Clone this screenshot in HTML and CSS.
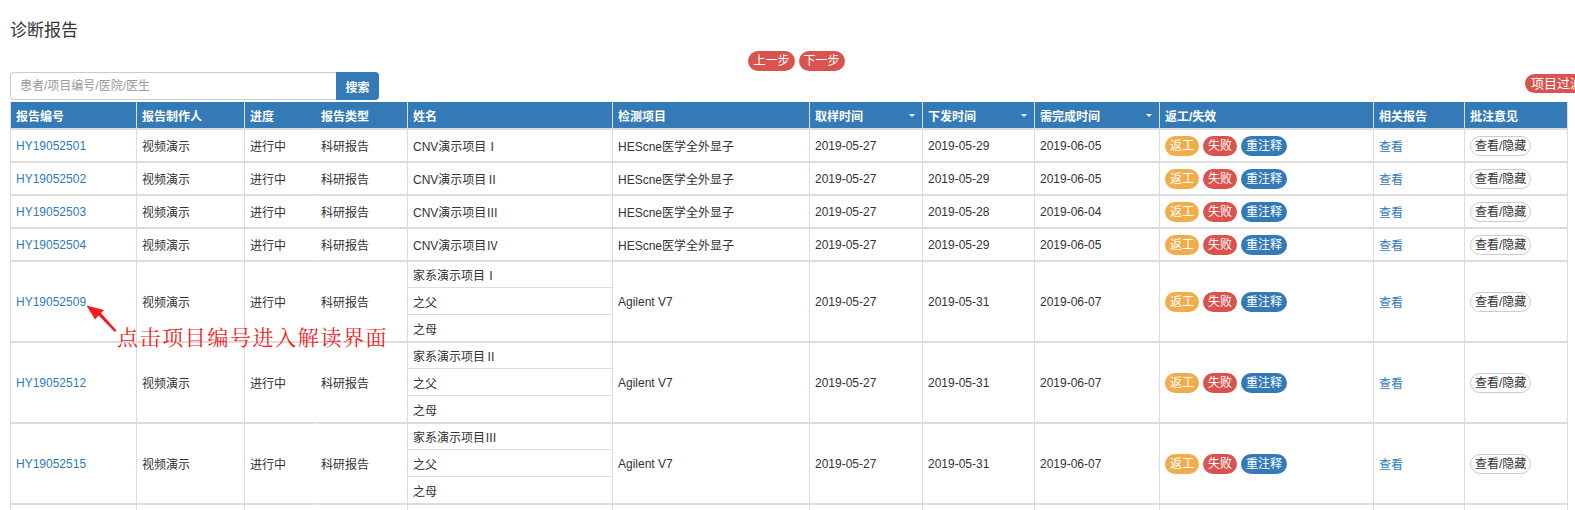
FILE: index.html
```html
<!DOCTYPE html>
<html lang="zh-CN">
<head>
<meta charset="utf-8">
<title>诊断报告</title>
<link rel="stylesheet" href="styles.css">
</head>
<body>
<div class="page">
  <h1 class="title">诊断报告</h1>
  <div class="steps">
    <span class="pill red">上一步</span>
    <span class="pill red">下一步</span>
  </div>
  <div class="toolbar">
    <div class="search">
      <input class="search-input" type="text" placeholder="患者/项目编号/医院/医生">
      <button class="search-btn">搜索</button>
    </div>
    <span class="pill red filter">项目过滤</span>
  </div>
  <table class="grid">
    <thead>
      <tr>
        <th class="c1">报告编号</th>
        <th class="c2">报告制作人</th>
        <th class="c3 nob">进度</th>
        <th class="c4">报告类型</th>
        <th class="c5">姓名</th>
        <th class="c6">检测项目</th>
        <th class="c7"><div class="sort"><span>取样时间</span><i class="caret"></i></div></th>
        <th class="c8"><div class="sort"><span>下发时间</span><i class="caret"></i></div></th>
        <th class="c9"><div class="sort"><span>需完成时间</span><i class="caret"></i></div></th>
        <th class="c10">返工/失效</th>
        <th class="c11">相关报告</th>
        <th class="c12">批注意见</th>
      </tr>
    </thead>
    <tbody>
      <tr>
        <td><a class="link">HY19052501</a></td><td>视频演示</td><td class="nob">进行中</td><td>科研报告</td>
        <td>CNV演示项目Ⅰ</td><td>HEScne医学全外显子</td><td>2019-05-27</td><td>2019-05-29</td><td>2019-06-05</td>
        <td><span class="pill orange">返工</span><span class="pill red">失败</span><span class="pill blue">重注释</span></td>
        <td><a class="link">查看</a></td><td><span class="toggle">查看/隐藏</span></td>
      </tr>
      <tr>
        <td><a class="link">HY19052502</a></td><td>视频演示</td><td class="nob">进行中</td><td>科研报告</td>
        <td>CNV演示项目Ⅱ</td><td>HEScne医学全外显子</td><td>2019-05-27</td><td>2019-05-29</td><td>2019-06-05</td>
        <td><span class="pill orange">返工</span><span class="pill red">失败</span><span class="pill blue">重注释</span></td>
        <td><a class="link">查看</a></td><td><span class="toggle">查看/隐藏</span></td>
      </tr>
      <tr>
        <td><a class="link">HY19052503</a></td><td>视频演示</td><td class="nob">进行中</td><td>科研报告</td>
        <td>CNV演示项目Ⅲ</td><td>HEScne医学全外显子</td><td>2019-05-27</td><td>2019-05-28</td><td>2019-06-04</td>
        <td><span class="pill orange">返工</span><span class="pill red">失败</span><span class="pill blue">重注释</span></td>
        <td><a class="link">查看</a></td><td><span class="toggle">查看/隐藏</span></td>
      </tr>
      <tr>
        <td><a class="link">HY19052504</a></td><td>视频演示</td><td class="nob">进行中</td><td>科研报告</td>
        <td>CNV演示项目Ⅳ</td><td>HEScne医学全外显子</td><td>2019-05-27</td><td>2019-05-29</td><td>2019-06-05</td>
        <td><span class="pill orange">返工</span><span class="pill red">失败</span><span class="pill blue">重注释</span></td>
        <td><a class="link">查看</a></td><td><span class="toggle">查看/隐藏</span></td>
      </tr>
      <tr>
        <td><a class="link">HY19052509</a></td><td>视频演示</td><td class="nob">进行中</td><td>科研报告</td>
        <td class="names"><table class="sub"><tr><td>家系演示项目Ⅰ</td></tr><tr><td>之父</td></tr><tr><td>之母</td></tr></table></td>
        <td>Agilent V7</td><td>2019-05-27</td><td>2019-05-31</td><td>2019-06-07</td>
        <td><span class="pill orange">返工</span><span class="pill red">失败</span><span class="pill blue">重注释</span></td>
        <td><a class="link">查看</a></td><td><span class="toggle">查看/隐藏</span></td>
      </tr>
      <tr>
        <td><a class="link">HY19052512</a></td><td>视频演示</td><td class="nob">进行中</td><td>科研报告</td>
        <td class="names"><table class="sub"><tr><td>家系演示项目Ⅱ</td></tr><tr><td>之父</td></tr><tr><td>之母</td></tr></table></td>
        <td>Agilent V7</td><td>2019-05-27</td><td>2019-05-31</td><td>2019-06-07</td>
        <td><span class="pill orange">返工</span><span class="pill red">失败</span><span class="pill blue">重注释</span></td>
        <td><a class="link">查看</a></td><td><span class="toggle">查看/隐藏</span></td>
      </tr>
      <tr>
        <td><a class="link">HY19052515</a></td><td>视频演示</td><td class="nob">进行中</td><td>科研报告</td>
        <td class="names"><table class="sub"><tr><td>家系演示项目Ⅲ</td></tr><tr><td>之父</td></tr><tr><td>之母</td></tr></table></td>
        <td>Agilent V7</td><td>2019-05-27</td><td>2019-05-31</td><td>2019-06-07</td>
        <td><span class="pill orange">返工</span><span class="pill red">失败</span><span class="pill blue">重注释</span></td>
        <td><a class="link">查看</a></td><td><span class="toggle">查看/隐藏</span></td>
      </tr>
      <tr>
        <td></td><td></td><td class="nob"></td><td></td><td></td><td></td><td></td><td></td><td></td><td></td><td></td><td></td>
      </tr>
    </tbody>
  </table>
</div>
<div class="note">
  <svg class="note-arrow" viewBox="80 300 40 36" width="40" height="36" aria-hidden="true">
    <polygon points="86.5,305.5 104,310 101,313 116.5,330.5 114.8,332 98.6,315.4 95,319.5" fill="#f21c1c"/>
  </svg>
  <span class="note-text">点击项目编号进入解读界面</span>
</div>
</body>
</html>
```
FILE: styles.css
```css
html, body {
  margin: 0;
  padding: 0;
  background: #fff;
}
body {
  position: relative;
  overflow-x: hidden;
  font-family: "Liberation Sans", "Noto Sans CJK SC", sans-serif;
  font-size: 12px;
  color: #333;
}
.page {
  padding: 0 10px;
}
.title {
  margin: 0;
  padding-top: 19px;
  height: 24px;
  line-height: 24px;
  font-size: 17px;
  font-weight: normal;
  color: #333;
}
.steps {
  display: flex;
  justify-content: center;
  gap: 4px;
  margin-top: 8px;
  padding-left: 18px;
  height: 20px;
}
.pill {
  display: inline-block;
  height: 20px;
  line-height: 20px;
  padding: 0 5px;
  border-radius: 10px;
  color: #fff;
  font-size: 12px;
  white-space: nowrap;
  vertical-align: middle;
}
.red { background: #d9534f; }
.orange { background: #f0ad4e; }
.blue { background: #337ab7; }
.toolbar {
  display: flex;
  align-items: flex-start;
  margin-top: 1px;
  margin-right: -24px;
}
.search {
  display: flex;
}
.search-input {
  width: 326px;
  height: 28px;
  box-sizing: border-box;
  border: 1px solid #ccc;
  border-right: none;
  border-radius: 4px 0 0 4px;
  padding: 0 9px;
  font-family: "Liberation Sans", "Noto Sans CJK SC", sans-serif;
  font-size: 12px;
  color: #333;
  outline: none;
}
.search-input::placeholder {
  color: #999;
}
.search-btn {
  width: 43px;
  height: 28px;
  border: none;
  border-radius: 0 4px 4px 0;
  background: #337ab7;
  color: #fff;
  font-family: "Liberation Sans", "Noto Sans CJK SC", sans-serif;
  font-size: 12px;
  font-weight: bold;
  padding: 0;
}
.filter {
  margin-left: auto;
  margin-top: 2px;
  height: 19px;
  line-height: 19px;
  padding: 0 6px;
  font-size: 13px;
}
.grid {
  margin-top: 2px;
  width: 1558px;
  table-layout: fixed;
  border-collapse: separate;
  border-spacing: 0;
}
.grid > thead > tr > th {
  box-sizing: border-box;
  height: 26px;
  padding: 0 5px;
  background: #337ab7;
  color: #fff;
  font-weight: bold;
  text-align: left;
  white-space: nowrap;
  border-right: 1px solid #ddd;
}
.grid > thead > tr > th:first-child,
.grid > tbody > tr > td:first-child {
  border-left: 1px solid #ddd;
}
.grid > tbody > tr > td {
  box-sizing: border-box;
  height: 33px;
  padding: 0 5px;
  vertical-align: middle;
  border-top: 2px solid #ddd;
  border-right: 1px solid #ddd;
  white-space: nowrap;
}
.grid > thead > tr > th.nob,
.grid > tbody > tr > td.nob {
  border-right-color: transparent;
}
.c1 { width: 127px; }
.c2 { width: 108px; }
.c3 { width: 71px; }
.c4 { width: 92px; }
.c5 { width: 205px; }
.c6 { width: 197px; }
.c7 { width: 113px; }
.c8 { width: 112px; }
.c9 { width: 125px; }
.c10 { width: 214px; }
.c11 { width: 91px; }
.c12 { width: 103px; }
.sort {
  display: flex;
  align-items: center;
  justify-content: space-between;
  padding-right: 2px;
}
.caret {
  display: block;
  width: 0;
  height: 0;
  border-left: 3px solid transparent;
  border-right: 3px solid transparent;
  border-top: 3px solid #fff;
}
.link {
  color: #337ab7;
  text-decoration: none;
  cursor: pointer;
}
.grid .pill {
  margin-right: 4px;
}
.toggle {
  display: inline-block;
  box-sizing: border-box;
  height: 20px;
  line-height: 18px;
  padding: 0 4px;
  border: 1px solid #ccc;
  border-radius: 10px;
  background: #fff;
  color: #333;
  white-space: nowrap;
}
.grid > tbody > tr > td.names {
  padding: 0;
}
.sub {
  width: 100%;
  border-collapse: separate;
  border-spacing: 0;
}
.sub td {
  box-sizing: border-box;
  height: 25px;
  padding: 0 5px;
  vertical-align: middle;
}
.sub tr + tr td {
  height: 27px;
  border-top: 1px solid #ddd;
}
.note {
  position: absolute;
  left: 0;
  top: 0;
  width: 0;
  height: 0;
}
.note-arrow {
  position: absolute;
  left: 80px;
  top: 300px;
  display: block;
}
.note-text {
  position: absolute;
  left: 117px;
  top: 324px;
  font-family: "Noto Serif CJK SC", "Noto Sans CJK SC", serif;
  font-size: 21px;
  line-height: 24px;
  letter-spacing: 1.6px;
  color: #f21c1c;
  white-space: nowrap;
}
```
